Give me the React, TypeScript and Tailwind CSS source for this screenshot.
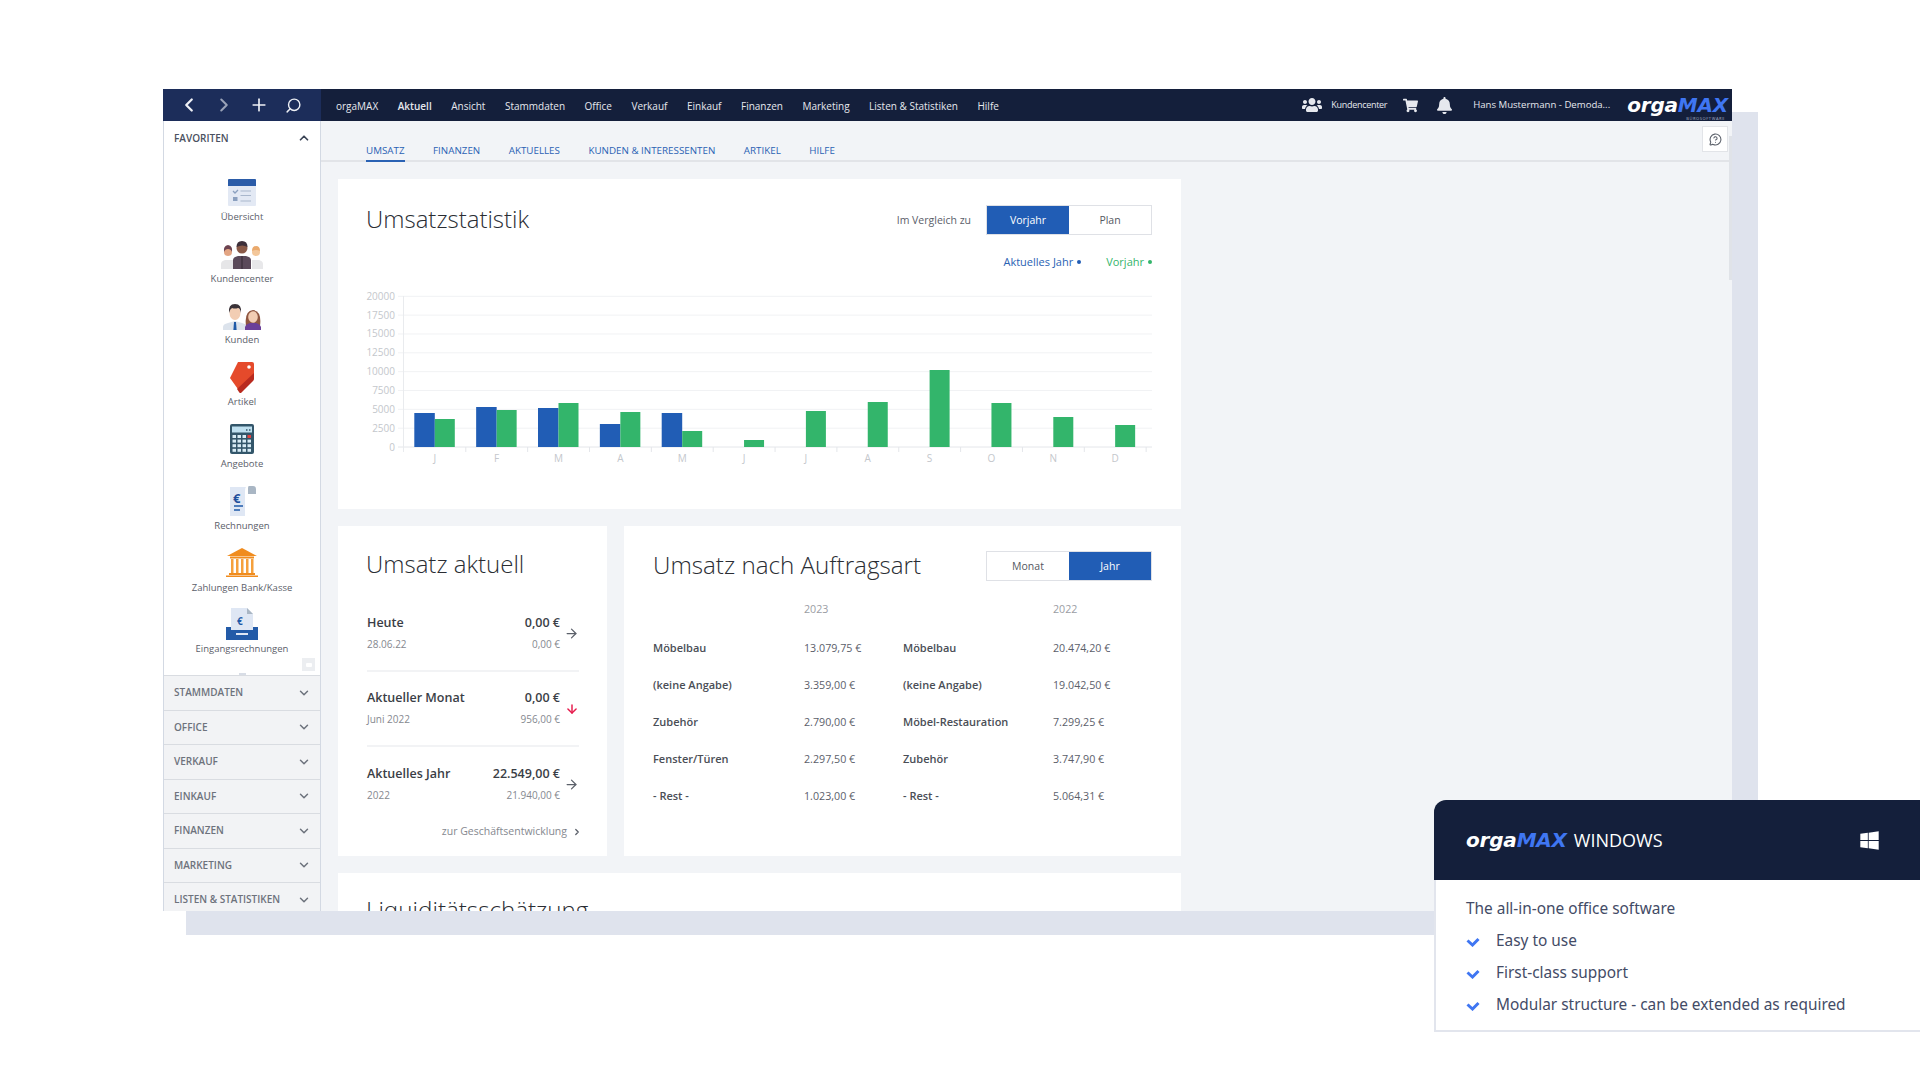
import { ArrowDown, ArrowRight, ChevronDown, ChevronLeft, ChevronRight, ChevronUp, MessageCircleQuestion, Plus, Search } from "lucide-react";
import { FaBell, FaShoppingCart, FaUsers, FaWindows } from "react-icons/fa";

const menu = ["orgaMAX", "Aktuell", "Ansicht", "Stammdaten", "Office", "Verkauf", "Einkauf", "Finanzen", "Marketing", "Listen & Statistiken", "Hilfe"];
const tabs = ["UMSATZ", "FINANZEN", "AKTUELLES", "KUNDEN & INTERESSENTEN", "ARTIKEL", "HILFE"];
const sections = ["STAMMDATEN", "OFFICE", "VERKAUF", "EINKAUF", "FINANZEN", "MARKETING", "LISTEN & STATISTIKEN"];

// heights in px read off the reference, blue is empty from June on
const months = [
  { m: "J", blue: 34, green: 28 },
  { m: "F", blue: 40, green: 37 },
  { m: "M", blue: 39, green: 44 },
  { m: "A", blue: 23, green: 35 },
  { m: "M", blue: 34, green: 16 },
  { m: "J", blue: 0, green: 7 },
  { m: "J", blue: 0, green: 36 },
  { m: "A", blue: 0, green: 45 },
  { m: "S", blue: 0, green: 77 },
  { m: "O", blue: 0, green: 44 },
  { m: "N", blue: 0, green: 30 },
  { m: "D", blue: 0, green: 22 },
];
const yLabels = ["20000", "17500", "15000", "12500", "10000", "7500", "5000", "2500", "0"];

const umsatz = [
  { name: "Heute", sub: "28.06.22", value: "0,00 €", prev: "0,00 €", dir: "right" },
  { name: "Aktueller Monat", sub: "Juni 2022", value: "0,00 €", prev: "956,00 €", dir: "down" },
  { name: "Aktuelles Jahr", sub: "2022", value: "22.549,00 €", prev: "21.940,00 €", dir: "right" },
];

const auftragsart = [
  ["Möbelbau", "13.079,75 €", "Möbelbau", "20.474,20 €"],
  ["(keine Angabe)", "3.359,00 €", "(keine Angabe)", "19.042,50 €"],
  ["Zubehör", "2.790,00 €", "Möbel-Restauration", "7.299,25 €"],
  ["Fenster/Türen", "2.297,50 €", "Zubehör", "3.747,90 €"],
  ["- Rest -", "1.023,00 €", "- Rest -", "5.064,31 €"],
];

const bullets = ["Easy to use", "First-class support", "Modular structure - can be extended as required"];

const IconUebersicht = () => (
  <svg width="42" height="32" viewBox="0 0 42 32">
    <rect x="7" y="3" width="28" height="27" rx="1" fill="#e3e9f4" />
    <path d="M7 4a1 1 0 0 1 1-1h26a1 1 0 0 1 1 1v6H7z" fill="#2b5ca8" />
    <path d="M12 15l2 2 3-3" fill="none" stroke="#8ba0bf" strokeWidth="1.3" />
    <rect x="12" y="21" width="4.5" height="4" fill="#8ba0bf" />
    <path d="M19.5 15h10.5M19.5 19.5h10.5M19.5 25h10.5" stroke="#a9b7cc" strokeWidth="1.2" />
  </svg>
);

const IconKundencenter = () => (
  <svg width="42" height="32" viewBox="0 0 42 32">
    <path d="M0 31v-5q0-3 4-4h8v9z" fill="#e6e6e8" />
    <path d="M31 31v-9h7q4 1 4 4v5z" fill="#e8e8ea" />
    <circle cx="7" cy="14" r="4" fill="#e3a583" />
    <path d="M3 14q-1-6 4-7 5 1 4 7-1-3-4-3t-4 3z" fill="#6d4350" />
    <circle cx="35" cy="14" r="4" fill="#f3c79b" />
    <path d="M31 13q0-5 4-5t4 5q-4-2-8 0z" fill="#eaa96c" />
    <path d="M12 31v-9q0-3 5-4h8q5 1 5 4v9z" fill="#5b4a5a" />
    <path d="M20 18h2v13h-2z" fill="#473946" />
    <circle cx="21" cy="10" r="5.5" fill="#8a5a48" />
    <path d="M15.5 9q0-6 5.5-6t5.500 6q-5-3-11 0z" fill="#3d2f3a" />
  </svg>
);

const IconKunden = () => (
  <svg width="42" height="32" viewBox="0 0 42 32">
    <path d="M2 31v-3q0-3 5-4l7-2 7 2q5 1 5 4v3z" fill="#dce3ec" />
    <path d="M13 23h2l.6 8h-3.200z" fill="#1f5aa8" />
    <ellipse cx="14" cy="14" rx="5.500" ry="7" fill="#f2cdb3" />
    <path d="M8 14q-1-9 6-9t6 9q-1-5-3-5-3 1-6 0-2 1-3 5z" fill="#3a3238" />
    <path d="M25 27q-2-15 7-16 9 1 7 16z" fill="#8f5640" />
    <ellipse cx="32" cy="18" rx="4.800" ry="5.800" fill="#f2cdb3" />
    <path d="M24 31v-3q1-3 5-4h6q4 1 5 4v3z" fill="#6b3f98" />
  </svg>
);

const IconArtikel = () => (
  <svg width="42" height="32" viewBox="0 0 42 32">
    <path d="M17 1h14q2 0 2 2v13L19 31 9 17z" fill="#e54a2b" />
    <path d="M33 12v6q0 1-1 2L20 32q-1 .5-2-1l-2-3z" fill="#b92a1f" />
    <circle cx="28" cy="6" r="1.800" fill="#fff" />
  </svg>
);

const IconAngebote = () => (
  <svg width="42" height="32" viewBox="0 0 42 32">
    <rect x="9" y="1" width="24" height="30" rx="2" fill="#33566a" />
    <rect x="11" y="3.500" width="20" height="6" fill="#bfe0f0" />
    <path d="M25 7h1.500M28 7h1.500" stroke="#33566a" strokeWidth="1.500" />
    {[0, 1, 2, 3].map((r) =>
      [0, 1, 2, 3].map((c) => (
        <rect key={`${r}-${c}`} x={11.5 + c * 5} y={12 + r * 4.6} width="3.500" height="3" fill={r === 0 && c === 3 ? "#e2413f" : "#d8ecf5"} />
      )),
    )}
  </svg>
);

const IconRechnungen = () => (
  <svg width="42" height="32" viewBox="0 0 42 32">
    <path d="M9 2h16q-1 1-1 4v25H9z" fill="#dfe7f4" />
    <path d="M28 1h4q3 0 3 3v5h-8V3q0-2 1-2z" fill="#a9b6c4" />
    <text x="12" y="18" fontFamily="'Open Sans', sans-serif" fontSize="13" fontWeight="700" fill="#1f4f9c">€</text>
    <path d="M13 21h9M13 25h6" stroke="#1f5aa8" strokeWidth="1.400" />
  </svg>
);

const IconBank = () => (
  <svg width="42" height="32" viewBox="0 0 42 32">
    <path d="M21 1L6 9h30z" fill="#f08c1e" />
    <path d="M9 9.500h24v2H9z" fill="#f08c1e" />
    {[10, 15, 20, 25, 30].map((x) => (
      <rect key={x} x={x} y="12" width="2.500" height="14" fill="#f5a03c" />
    ))}
    <path d="M8 26h26v2H8zM5 28.500h32V30H5z" fill="#f08c1e" />
  </svg>
);

const IconEingang = () => (
  <svg width="42" height="32" viewBox="0 0 42 32">
    <path d="M10 0h16l6 6v16H10z" fill="#dfe7f4" />
    <path d="M26 0l6 6h-6z" fill="#a9b6c4" />
    <text x="16" y="17" fontFamily="'Open Sans', sans-serif" fontSize="10" fontWeight="700" fill="#1f5aa8">€</text>
    <path d="M5 19h5v3h22v-3h5v13H5z" fill="#235ba8" />
    <rect x="15" y="25" width="12" height="2" fill="#dfe7f4" />
  </svg>
);

const favorites = [
  { label: "Übersicht", icon: <IconUebersicht /> },
  { label: "Kundencenter", icon: <IconKundencenter /> },
  { label: "Kunden", icon: <IconKunden /> },
  { label: "Artikel", icon: <IconArtikel /> },
  { label: "Angebote", icon: <IconAngebote /> },
  { label: "Rechnungen", icon: <IconRechnungen /> },
  { label: "Zahlungen Bank/Kasse", icon: <IconBank /> },
  { label: "Eingangsrechnungen", icon: <IconEingang /> },
];

const Logo = () => (
  <span className="font-['DejaVu_Sans',sans-serif] text-[20px] font-bold italic leading-none tracking-[-0.2px] text-white">
    orga<span className="text-[#3f76f2]">MAX</span>
  </span>
);

const Toggle = ({ left, right, active }: { left: string; right: string; active: "left" | "right" }) => (
  <div className="flex h-[30px] w-[166px] border border-[#dfe1e6] bg-white text-[10.5px]">
    <div className={`flex flex-1 items-center justify-center pt-[1px] ${active === "left" ? "bg-[#215db5] text-white" : "text-[#55585f]"}`}>{left}</div>
    <div className={`flex flex-1 items-center justify-center pt-[1px] ${active === "right" ? "bg-[#215db5] text-white" : "text-[#55585f]"}`}>{right}</div>
  </div>
);

const Chart = () => (
  <svg width="800" height="190" viewBox="358 285 800 190" className="ml-[20px] mt-[15px] block">
    {yLabels.map((label, i) => {
      const y = 296.3 + i * 18.84;
      return (
        <g key={label}>
          <line x1="398" x2="1152" y1={y} y2={y} stroke={i === 8 ? "#e4e6ea" : "#f1f2f4"} strokeWidth="1" />
          <text x="395" y={y + 3.5} textAnchor="end" fontSize="10" fill="#c4c7cc">
            {label}
          </text>
        </g>
      );
    })}
    <line x1="403.500" x2="403.500" y1="296" y2="452" stroke="#e9ebee" />
    {months.map((item, i) => {
      const c = 434.8 + 61.85 * i;
      return (
        <g key={i}>
          <line x1={c + 31} x2={c + 31} y1="447" y2="452" stroke="#e4e6ea" />
          {item.blue > 0 && <rect x={c - 20.5} y={447 - item.blue} width="20.500" height={item.blue} fill="#215db5" />}
          <rect x={c} y={447 - item.green} width="20" height={item.green} fill="#33b56b" />
          <text x={c} y="462" textAnchor="middle" fontSize="10" fill="#c4c7cc">
            {item.m}
          </text>
        </g>
      );
    })}
  </svg>
);

export default function App() {
  return (
    <div className="relative h-[1072px] w-[1920px] overflow-hidden bg-white pl-[163px] pt-[89px] font-['Open_Sans',sans-serif]">
      {/* backing plate behind the window */}
      <div className="absolute left-[186px] top-[112px] h-[823px] w-[1572px] bg-[#dfe3ed]" />

      <div className="relative flex h-[822px] w-[1569px] flex-col overflow-hidden bg-[#f2f4f7]">
        <header className="flex h-[32px] shrink-0 items-center bg-[#141f3b] text-[10px] text-[#e6e8ee]">
          <div className="flex h-full w-[158px] items-center bg-[#1c2d5a] pl-[15px] text-[#eef0f5]">
            <ChevronLeft size={22} strokeWidth={2.5} />
            <ChevronRight size={22} strokeWidth={2.2} className="ml-[13px] text-[#9aa3b8]" />
            <Plus size={20} strokeWidth={2} className="ml-[14px]" />
            <Search size={17} strokeWidth={2} className="ml-[16px] -scale-x-100" />
          </div>
          <nav className="ml-[15px] mt-[2px] flex items-center gap-[19.5px]">
            {menu.map((item) => (
              <span key={item} className={item === "Aktuell" ? "font-semibold" : ""}>
                {item}
              </span>
            ))}
          </nav>
          <div className="ml-auto flex items-center pr-[4px]">
            <FaUsers size={20} className="mr-[9px]" />
            <span className="mr-[16px] text-[9px] tracking-[-0.3px]">Kundencenter</span>
            <FaShoppingCart size={15} className="mr-[18px]" />
            <FaBell size={17} className="mr-[20px]" />
            <span className="mr-[17px] text-[9.6px]">Hans Mustermann - Demoda...</span>
            <div className="relative">
              <Logo />
              <span className="absolute -bottom-[5px] right-[3px] text-[4px] leading-none tracking-[0.6px] text-[#aab2c4]">BÜROSOFTWARE</span>
            </div>
          </div>
        </header>

        <div className="flex min-h-0 flex-1">
          <aside className="flex w-[158px] shrink-0 flex-col border-x border-[#d3d9e3] bg-white">
            <div className="flex h-[34px] shrink-0 items-center justify-between pl-[10px] pr-[9px] text-[10px] font-semibold text-[#4a5160]">
              <span>FAVORITEN</span>
              <ChevronUp size={14} strokeWidth={3} className="text-[#3c4556]" />
            </div>
            <div className="relative flex h-[520px] shrink-0 flex-col pt-[8px]">
              {favorites.map((f) => (
                <div key={f.label} className="flex h-[61.8px] shrink-0 flex-col items-center justify-end">
                  {f.icon}
                  <span className="mt-[1px] text-[9.5px] leading-[16px] text-[#5b606a]">{f.label}</span>
                </div>
              ))}
              <div className="absolute bottom-[4px] right-[5px] flex h-[13px] w-[13px] items-center justify-center bg-[#eceef1]">
                <div className="h-[4px] w-[6px] rounded-[1px] bg-white" />
              </div>
              <div className="absolute bottom-0 left-[75px] h-[2px] w-[7px] bg-[#d8dde6]" />
            </div>
            <div className="flex min-h-0 flex-1 flex-col bg-[#f2f3f5]">
              {sections.map((s) => (
                <div key={s} className="flex h-[34.5px] shrink-0 items-center justify-between border-t-[1.5px] border-[#d9dce1] pl-[10px] pr-[9px] text-[10px] font-semibold text-[#6d727c]">
                  <span>{s}</span>
                  <ChevronDown size={14} strokeWidth={2.5} className="text-[#6d727c]" />
                </div>
              ))}
            </div>
          </aside>

          <main className="relative min-w-0 flex-1">
            <div className="absolute right-0 top-[15px] h-[144px] w-[3px] bg-[#e0e3e8]" />
            <div className="flex h-[41px] items-center border-b-2 border-[#e2e4e8] pl-[45px] pr-[4px]">
              <div className="flex h-full flex-1 gap-[28.5px] text-[9.8px] text-[#2a62b4]">
                {tabs.map((t, i) => (
                  <span key={t} className={`flex h-[41px] items-start pt-[22px] leading-[15px] ${i === 0 ? "border-b-2 border-[#2a62b4]" : ""}`}>
                    {t}
                  </span>
                ))}
              </div>
              <div className="mb-[3px] flex h-[26px] w-[26px] items-center justify-center border border-[#e2e4e8] bg-white">
                <MessageCircleQuestion size={13} className="text-[#5b606a]" />
              </div>
            </div>

            <div className="flex w-[860px] flex-col gap-[17px] pl-[17px] pt-[17px]">
              <section className="h-[330px] bg-white pt-[26px]">
                <div className="flex items-center justify-between pl-[29px] pr-[29px]">
                  <h2 className="-ml-[1px] -mt-[2px] text-[24px] font-light leading-[28px] text-[#2a2d33]">Umsatzstatistik</h2>
                  <div className="flex items-center gap-[15px]">
                    <span className="pt-[1px] text-[10.5px] text-[#5b606a]">Im Vergleich zu</span>
                    <Toggle left="Vorjahr" right="Plan" active="left" />
                  </div>
                </div>
                <div className="mt-[19px] flex h-[16px] items-center justify-end gap-[25px] pr-[29px] text-[11px]">
                  <span className="flex items-center gap-[4px] text-[#2a62b4]">
                    Aktuelles Jahr <i className="h-[4px] w-[4px] rounded-full bg-[#215db5]" />
                  </span>
                  <span className="flex items-center gap-[4px] text-[#33b56b]">
                    Vorjahr <i className="h-[4px] w-[4px] rounded-full bg-[#33b56b]" />
                  </span>
                </div>
                <Chart />
              </section>

              <div className="flex h-[330px] gap-[17px]">
                <section className="w-[269px] bg-white pl-[29px] pr-[28px] pt-[21px]">
                  <h2 className="-ml-[1px] mb-[16px] text-[24px] font-light leading-[34px] text-[#2a2d33]">Umsatz aktuell</h2>
                  {umsatz.map((row, i) => (
                    <div key={row.name} className={`flex h-[75px] items-center ${i < 2 ? "border-b-2 border-[#f2f3f5]" : ""}`}>
                      <div className="flex-1">
                        <div className="text-[12.5px] font-semibold leading-[20px] text-[#3a3e46]">{row.name}</div>
                        <div className="text-[10px] leading-[22px] text-[#85888f]">{row.sub}</div>
                      </div>
                      <div className="text-right">
                        <div className="text-[12.5px] font-semibold leading-[20px] text-[#3a3e46]">{row.value}</div>
                        <div className="text-[10px] leading-[22px] text-[#85888f]">{row.prev}</div>
                      </div>
                      <div className="flex w-[19px] justify-end">
                        {row.dir === "down" ? (
                          <ArrowDown size={14} strokeWidth={2.5} className="text-[#e6194b]" />
                        ) : (
                          <ArrowRight size={15} strokeWidth={2} className="text-[#5b606a]" />
                        )}
                      </div>
                    </div>
                  ))}
                  <div className="-mr-[3px] flex h-[20px] items-center justify-end gap-[5px] text-[10.5px] text-[#85888f]">
                    zur Geschäftsentwicklung
                    <ChevronRight size={10} strokeWidth={3} className="text-[#5b606a]" />
                  </div>
                </section>

                <section className="flex-1 bg-white pl-[29px] pr-[29px] pt-[25px]">
                  <div className="flex h-[30px] items-center justify-between">
                    <h2 className="-mt-[2px] text-[24.2px] font-light leading-[30px] text-[#2a2d33]">Umsatz nach Auftragsart</h2>
                    <Toggle left="Monat" right="Jahr" active="right" />
                  </div>
                  <div className="mt-[8px] grid grid-cols-[151px_99px_150px_1fr] grid-rows-[41px] auto-rows-[37px] items-center text-[10.7px]">
                    <span />
                    <span className="text-[#9a9da3]">2023</span>
                    <span />
                    <span className="text-[#9a9da3]">2022</span>
                    {auftragsart.map((row) =>
                      row.map((cell, c) => (
                        <span key={`${row[0]}-${c}-${cell}`} className={c % 2 === 0 ? "text-[11px] font-semibold text-[#4a4e56]" : "text-[#5b606a]"}>
                          {cell}
                        </span>
                      )),
                    )}
                  </div>
                </section>
              </div>

              <section className="h-[100px] bg-white pl-[29px] pt-[20px]">
                <h2 className="-ml-[1px] text-[24.2px] font-light leading-[34px] text-[#2a2d33]">Liquiditätsschätzung</h2>
              </section>
            </div>
          </main>
        </div>
      </div>

      {/* product card over the bottom right corner */}
      <div className="absolute left-[1434px] top-[800px] w-[486px] font-['Noto_Sans',sans-serif]">
        <div className="flex h-[80px] items-center rounded-tl-[12px] bg-[#141f3b] pl-[32px] pr-[40px] text-white">
          <Logo />
          <span className="ml-[7px] font-['Open_Sans',sans-serif] text-[18px]">WINDOWS</span>
          <FaWindows size={21} className="ml-auto" />
        </div>
        <div className="h-[152px] border-b-2 border-l-2 border-[#e2e5ed] bg-white pl-[30px] pt-[16px] text-[15.4px] text-[#434b66]">
          <p className="leading-[26px]">The all-in-one office software</p>
          <ul className="mt-[6px] flex flex-col gap-[6px]">
            {bullets.map((b) => (
              <li key={b} className="flex h-[26px] items-center">
                <svg width="14" height="10" viewBox="0 0 14 10" className="mr-[16px] mt-[2px] shrink-0">
                  <path d="M1.500 3.500L6.500 8l6-6" fill="none" stroke="#3f76f2" strokeWidth="3" />
                </svg>
                {b}
              </li>
            ))}
          </ul>
        </div>
      </div>
    </div>
  );
}
